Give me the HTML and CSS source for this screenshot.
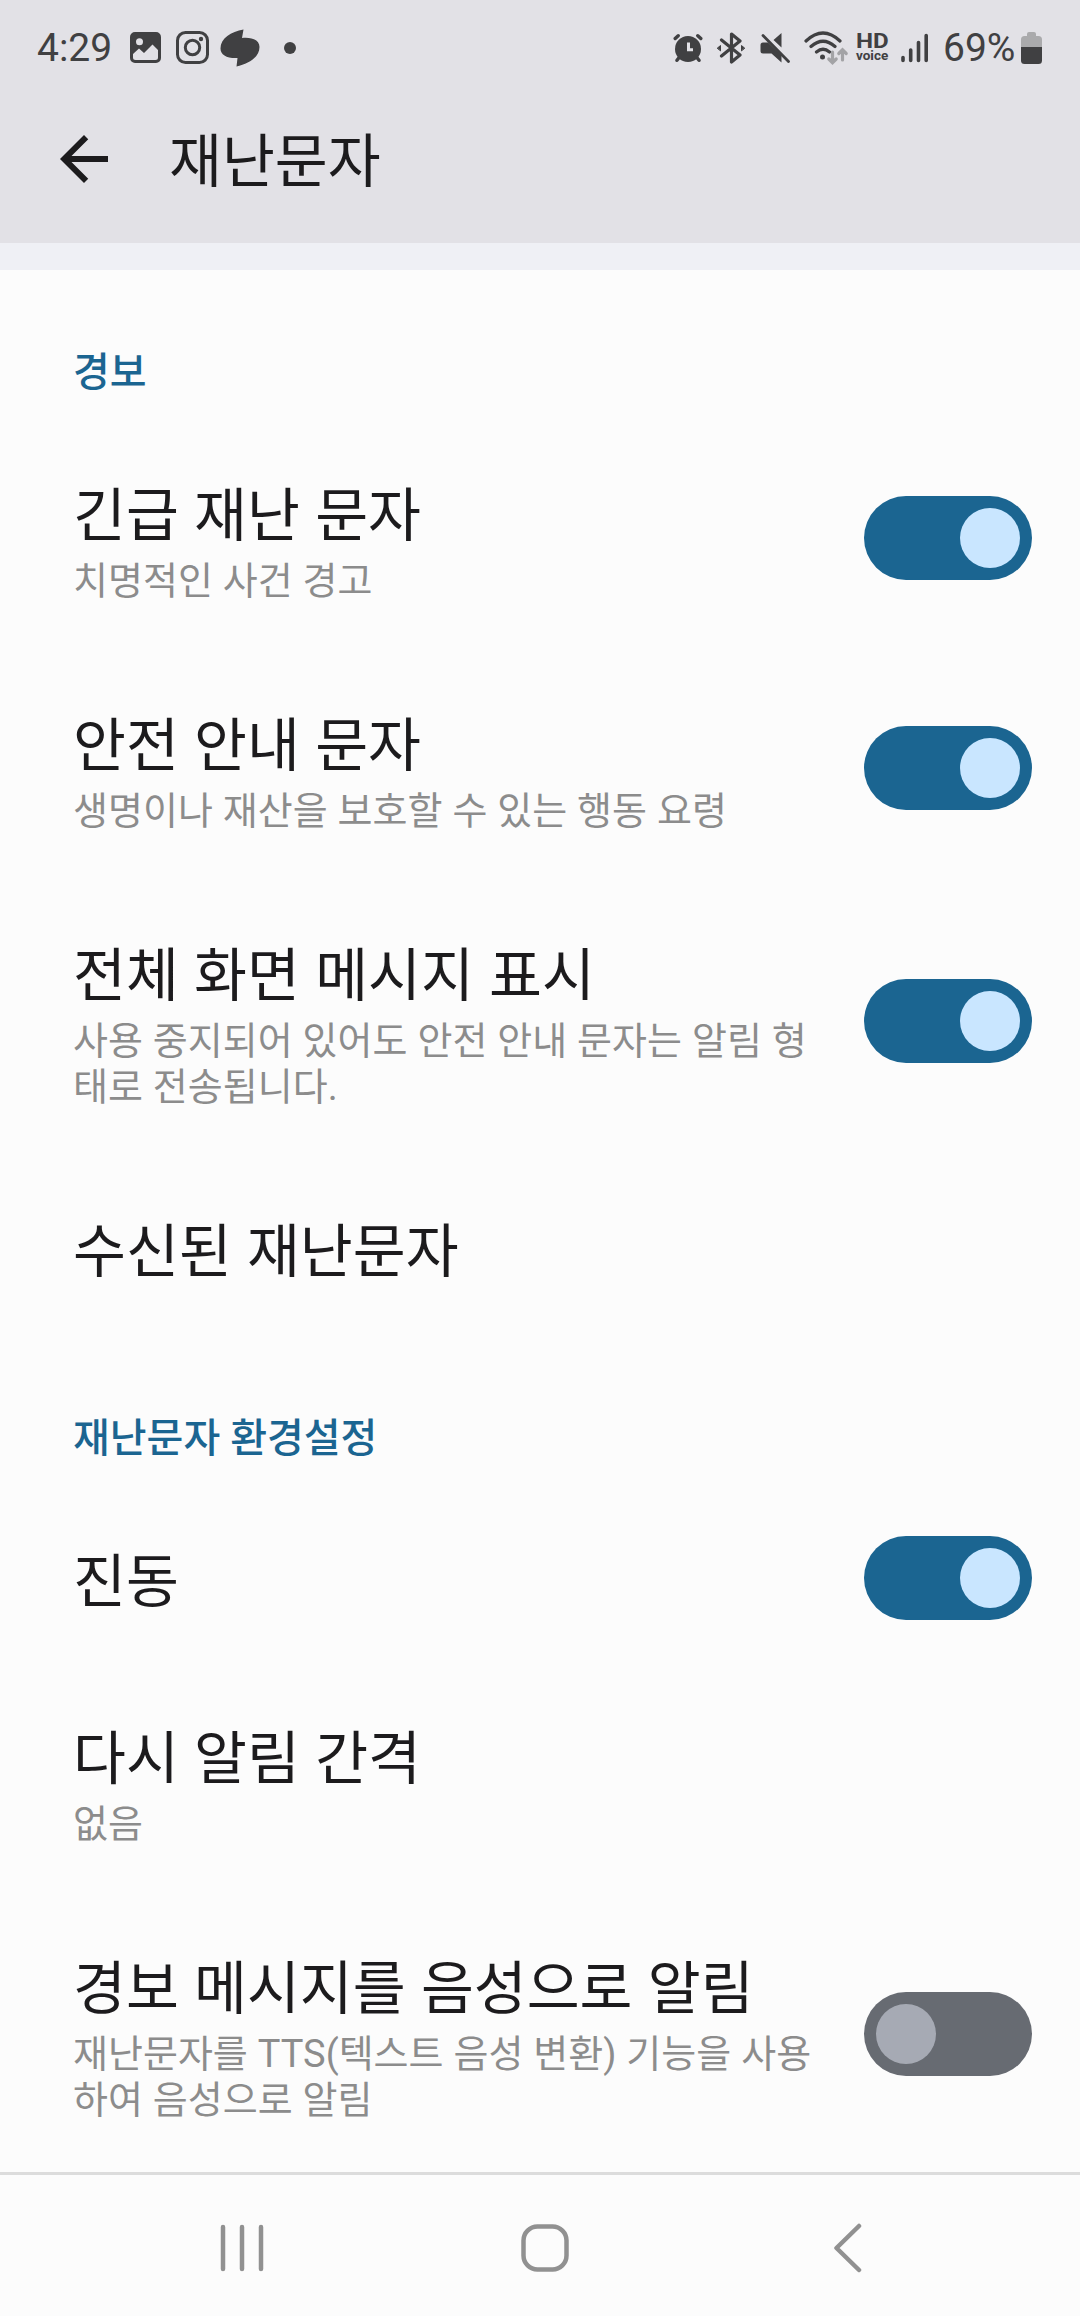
FILE: index.html
```
<!DOCTYPE html>
<html lang="ko">
<head>
    <meta charset="UTF-8">
    <meta name="viewport" content="width=device-width, initial-scale=1.0">
    <title>재난문자</title>
    <link rel="stylesheet" href="styles.css">
</head>
<body>
<header class="top">
    <div class="status-bar">
        <div class="status-left">
            <span class="time">4:29</span>
            <svg class="icon-gallery" width="31" height="31" viewBox="0 0 31 31">
                <path fill="#404042" fill-rule="evenodd" d="M5 0h21a5 5 0 0 1 5 5v21a5 5 0 0 1-5 5H5a5 5 0 0 1-5-5V5a5 5 0 0 1 5-5zM3 22v3.500a2.500 2.500 0 0 0 2.500 2.500h20a2.500 2.500 0 0 0 2.500-2.500V18l-5.500-5.500L14 21l-5-4.500zM9.500 6.300a3.500 3.500 0 1 0 0 7 3.500 3.500 0 1 0 0-7z"/>
            </svg>
            <svg class="icon-insta" width="33" height="33" viewBox="0 0 33 33" fill="none" stroke="#404042">
                <rect x="1.500" y="1.500" width="30" height="30" rx="8" stroke-width="3"/>
                <circle cx="16.500" cy="16.500" r="7.200" stroke-width="3"/>
                <circle cx="25" cy="8" r="2.200" fill="#404042" stroke="none"/>
            </svg>
            <svg class="icon-blob" width="40" height="38" viewBox="0 0 40 38">
                <path fill="#404042" d="M23.500 0.500L22 9C32 8 39.500 11 39.500 18C39.500 28 29 35 16.500 37.500L17.500 29C7 29.500 0.500 26 0.500 19.500C0.500 9 11 3 23.500 0.500z"/>
            </svg>
            <span class="more-dot"></span>
        </div>
        <div class="status-right">
            <svg class="icon-alarm" width="30" height="30" viewBox="0 0 30 30" stroke="#404042" stroke-width="3.400" stroke-linecap="round" fill="none">
                <path d="M2.200 5.500L5.200 2.700M27.800 5.500L24.800 2.700M6.500 24L4 27.300M23.500 24L26 27.300"/>
                <circle cx="15" cy="16" r="13" fill="#404042" stroke="none"/>
                <path d="M15.500 9.500V16.700H20" stroke="#e2e1e6" stroke-width="3" stroke-linecap="butt"/>
            </svg>
            <svg class="icon-bt" width="28" height="32" viewBox="0 0 28 32" stroke="#404042" stroke-width="3.200" stroke-linecap="round" stroke-linejoin="round" fill="none">
                <path d="M4.500 8L23 23L14.500 30V2L23 9L4.500 24"/>
                <path d="M0.500 16l3-2.500v5zM27.500 16l-3-2.500v5z" fill="#404042" stroke-width="1"/>
            </svg>
            <svg class="icon-mute" width="30" height="30" viewBox="0 0 30 30">
                <path fill="#404042" d="M21.500 0V14.500L13.500 7zM3 9.500H8L21.500 22.500V29.500L11.500 20.500H3a2.500 2.500 0 0 1-2.500-2.500V12a2.500 2.500 0 0 1 2.500-2.500z"/>
                <path stroke="#404042" stroke-width="2.800" stroke-linecap="round" d="M3 2.500L28.500 28.500"/>
            </svg>
            <svg class="icon-wifi" width="45" height="34" viewBox="0 0 45 34" fill="none" stroke="#404042" stroke-width="3.200" stroke-linecap="round">
                <path d="M2 10Q19 -6 36 10M7 15.500Q19 5 31 15.500M12.500 21Q19 15.500 25.500 21"/>
                <circle cx="18.500" cy="26" r="2.500" fill="#404042" stroke="none"/>
                <path stroke="#a3a3a6" d="M28.500 21V31.500M24.800 28L28.500 31.700L32.200 28M38.500 29V19M34.800 22.500L38.500 18.800L42.200 22.500"/>
            </svg>
            <div class="hd-voice"><span class="hd">HD</span><span class="voice">voice</span></div>
            <svg class="icon-signal" width="28" height="30" viewBox="0 0 28 30" stroke="#404042" stroke-width="3.600" stroke-linecap="round">
                <path d="M2 24.500V27.500M9.700 17V27.500M17.500 9.500V27.500M25.200 2.500V27.500"/>
            </svg>
            <span class="percent">69%</span>
            <svg class="icon-battery" width="21" height="32" viewBox="0 0 21 32">
                <path fill="#aaaaac" d="M6 2a2 2 0 0 1 2-2h5a2 2 0 0 1 2 2v2h2.500a3.500 3.500 0 0 1 3.500 3.500V15H0V7.500A3.500 3.500 0 0 1 3.500 4H6z"/>
                <path fill="#404042" d="M0 15h21v13.500a3.500 3.500 0 0 1-3.500 3.500h-14A3.500 3.500 0 0 1 0 28.500z"/>
            </svg>
        </div>
    </div>
    <div class="app-bar">
        <svg width="72" height="72" viewBox="0 0 24 24">
            <path fill="#1c1b1d" d="M20 11H7.830l5.590-5.590L12 4l-8 8 8 8 1.410-1.410L7.830 13H20z"/>
        </svg>
        <h1>재난문자</h1>
    </div>
</header>

<main class="settings">
    <h2>경보</h2>
    <div class="row">
        <div class="text">
            <div class="title">긴급 재난 문자</div>
            <div class="summary">치명적인 사건 경고</div>
        </div>
        <div class="switch on"></div>
    </div>
    <div class="row">
        <div class="text">
            <div class="title">안전 안내 문자</div>
            <div class="summary">생명이나 재산을 보호할 수 있는 행동 요령</div>
        </div>
        <div class="switch on"></div>
    </div>
    <div class="row">
        <div class="text">
            <div class="title">전체 화면 메시지 표시</div>
            <div class="summary">사용 중지되어 있어도 안전 안내 문자는 알림 형<br>태로 전송됩니다.</div>
        </div>
        <div class="switch on"></div>
    </div>
    <div class="row">
        <div class="text">
            <div class="title">수신된 재난문자</div>
        </div>
    </div>

    <h2>재난문자 환경설정</h2>
    <div class="row">
        <div class="text">
            <div class="title">진동</div>
        </div>
        <div class="switch on"></div>
    </div>
    <div class="row">
        <div class="text">
            <div class="title">다시 알림 간격</div>
            <div class="summary">없음</div>
        </div>
    </div>
    <div class="row">
        <div class="text">
            <div class="title">경보 메시지를 음성으로 알림</div>
            <div class="summary">재난문자를 TTS(텍스트 음성 변환) 기능을 사용<br>하여 음성으로 알림</div>
        </div>
        <div class="switch"></div>
    </div>
</main>

<nav class="nav-bar">
    <svg width="50" height="50" viewBox="0 0 50 50">
        <path d="M6 4V46M25 4V46M44 4V46"/>
    </svg>
    <svg width="50" height="50" viewBox="0 0 50 50">
        <rect x="3.500" y="3.500" width="43" height="43" rx="14"/>
    </svg>
    <svg width="50" height="50" viewBox="0 0 50 50">
        <path d="M37 3L14.500 25L37 47"/>
    </svg>
</nav>
</body>
</html>
```

FILE: styles.css
```
* {
    box-sizing: border-box;
}

body {
    margin: 0;
    width: 1080px;
    height: 2316px;
    overflow: hidden;
    background-color: #fcfcfc;
    color: #1c1b1d;
    font-family: Roboto, "Noto Sans CJK KR", sans-serif;
}

svg {
    display: block;
    flex: none;
}

.top {
    height: 270px;
    background-color: #e2e1e6;
    border-bottom: 27px solid #eff0f5;
}

.status-bar {
    display: flex;
    justify-content: space-between;
    height: 95px;
    padding: 0 38px 0 37px;
    color: #404042;
}

.status-left,
.status-right {
    display: flex;
    align-items: center;
}

.time,
.percent {
    font-size: 39px;
    line-height: 46px;
}

.time {
    width: 93px;
}

.icon-insta {
    margin-left: 15px;
}

.icon-blob {
    margin-left: 11px;
}

.more-dot {
    width: 12px;
    height: 12px;
    margin-left: 24px;
    border-radius: 50%;
    background-color: #404042;
}

.icon-bt {
    margin-left: 14px;
}

.icon-mute {
    margin-left: 15px;
}

.icon-wifi {
    margin-left: 14px;
}

.hd-voice {
    display: flex;
    flex-direction: column;
    width: 33px;
    margin-left: 7px;
    font-weight: 700;
}

.hd {
    font-size: 21px;
    line-height: 16px;
    transform: scaleX(1.15);
    transform-origin: left;
}

.voice {
    font-size: 13.5px;
    line-height: 13px;
}

.icon-signal {
    margin-left: 12px;
}

.percent {
    width: 78px;
    margin-left: 14px;
}

.app-bar {
    display: flex;
    align-items: center;
    height: 128px;
    padding-left: 48px;
}

h1 {
    margin: 8px 0 0 49px;
    font-size: 57.5px;
    font-weight: 400;
    line-height: 72px;
}

h2 {
    height: 153px;
    margin: 0;
    padding: 73px 0 0 73px;
    color: #1b6591;
    font-size: 40px;
    font-weight: 500;
    line-height: 60px;
}

.row {
    display: flex;
    align-items: center;
    justify-content: space-between;
    padding: 54px 48px 54px 73px;
}

/* hangul sits a little high in its line box */
.text {
    margin: 5px 0 -5px;
}

.title {
    font-size: 57.5px;
    line-height: 69px;
    word-spacing: 1px;
}

.summary {
    margin-top: 7px;
    color: #8c8c8c;
    font-size: 38px;
    line-height: 46px;
    word-spacing: 0.5px;
    white-space: nowrap;
}

.switch {
    display: flex;
    flex: none;
    width: 168px;
    height: 84px;
    margin: -10px 0;
    padding: 12px;
    border-radius: 42px;
    background-color: #676b72;
}

.switch::before {
    content: "";
    width: 60px;
    height: 60px;
    border-radius: 50%;
    background-color: #a6aab4;
}

.switch.on {
    justify-content: flex-end;
    background-color: #1b6591;
}

.switch.on::before {
    background-color: #c9e6ff;
}

.nav-bar {
    display: flex;
    justify-content: space-between;
    height: 144px;
    padding: 48px 208px 0 217px;
    border-top: 3px solid #dcdcdc;
}

.nav-bar svg {
    fill: none;
    stroke: #919191;
    stroke-width: 4.5;
    stroke-linecap: round;
    stroke-linejoin: round;
}
```
